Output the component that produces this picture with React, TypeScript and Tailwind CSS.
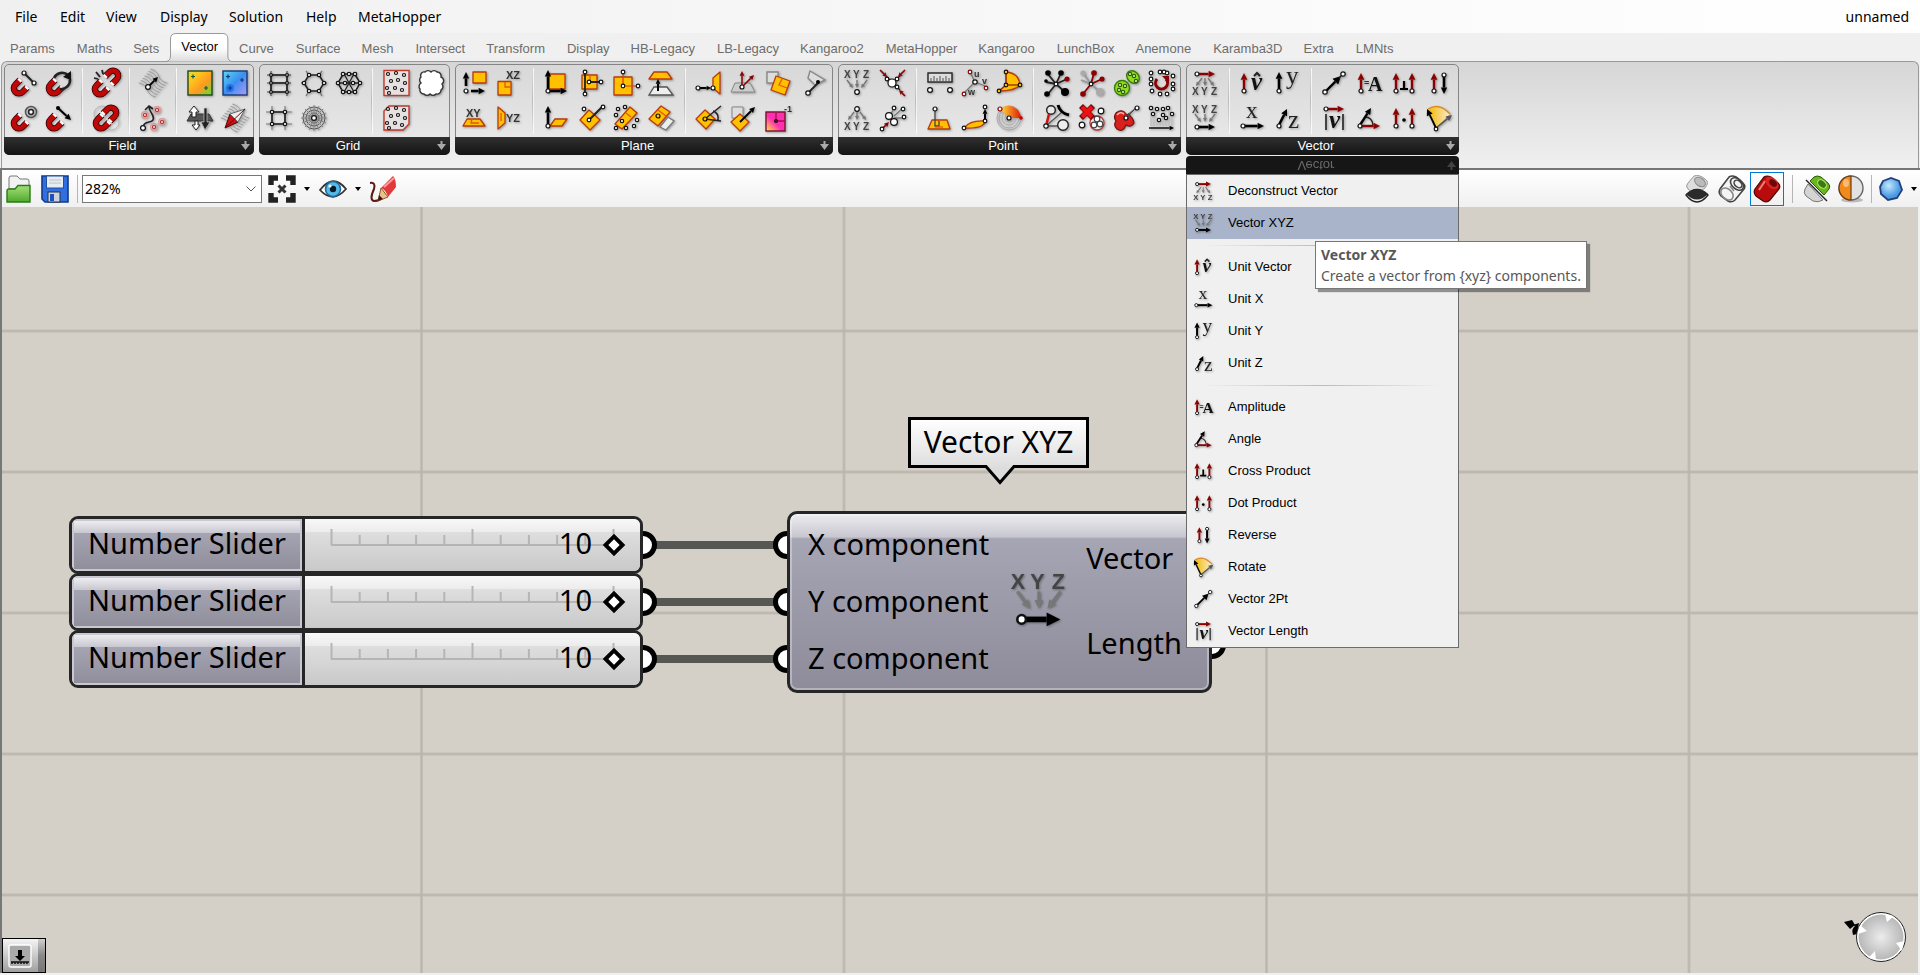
import React, { useState } from 'react';

const RED = '#8b0000';
const GOLD = '#ffc000';
const RUST = '#b83a0c';
const GREY = '#777';

type Pt = [number, number];

// ---------- icon primitives (26 x 26 box) ----------

const Dot = ({ x, y, r = 2, c = '#111', f = '#fff' }: { x: number; y: number; r?: number; c?: string; f?: string }) => (
  <circle cx={x} cy={y} r={r} fill={f} stroke={c} strokeWidth="1.2" />
);

const Arrow = ({ a, b, c = '#000', w = 2, s = 3 }: { a: Pt; b: Pt; c?: string; w?: number; s?: number }) => {
  const len = Math.hypot(b[0] - a[0], b[1] - a[1]);
  const ux = (b[0] - a[0]) / len;
  const uy = (b[1] - a[1]) / len;
  const mx = b[0] - ux * s * 2;
  const my = b[1] - uy * s * 2;
  return (
    <g>
      <path d={`M${a[0]} ${a[1]}L${mx} ${my}`} stroke={c} strokeWidth={w} />
      <path d={`M${b[0]} ${b[1]}L${mx - uy * s} ${my + ux * s}L${mx + uy * s} ${my - ux * s}Z`} fill={c} />
    </g>
  );
};

const Line = ({ d, c = '#222', w = 1.3, f = 'none' }: { d: string; c?: string; w?: number; f?: string }) => (
  <path d={d} stroke={c} strokeWidth={w} fill={f} />
);

const Plane = ({ d }: { d: string }) => <path d={d} fill={GOLD} stroke={RUST} strokeWidth="1.3" strokeLinejoin="round" />;

const Magnet = ({ t = '' }: { t?: string }) => (
  <g transform={t} fill="none">
    <path d="M9 10L4.500 14.500A5 5 0 0 0 11.500 22L16 17.500" stroke="#300" strokeWidth="6.400" />
    <path d="M9 10L4.500 14.500A5 5 0 0 0 11.500 22L16 17.500" stroke="#c00808" strokeWidth="4.800" />
    <path d="M9.500 9.500L8 11M16.500 17L15 18.500" stroke="#fff" strokeWidth="4.400" />
  </g>
);

const T = ({ x, y, s = 10, c = '#333', serif, italic, bold, children }: { x: number; y: number; s?: number; c?: string; serif?: boolean; italic?: boolean; bold?: boolean; children: string }) => (
  <text x={x} y={y} fontSize={s} fill={c} fontFamily={serif ? '"Liberation Serif", serif' : '"Liberation Sans", sans-serif'} fontStyle={italic ? 'italic' : 'normal'} fontWeight={bold ? 700 : 400}>
    {children}
  </text>
);

const Letters = ({ y }: { y: number }) => (
  <g>
    <T x={-1} y={y} c="#444" bold>X</T>
    <T x={8} y={y} c="#444" bold>Y</T>
    <T x={18} y={y} c="#444" bold>Z</T>
  </g>
);

const Rays = ({ y, up }: { y: number; up?: boolean }) =>
  up ? (
    <g>
      <Arrow a={[9, y]} b={[3, y + 8]} c={GREY} w={1.4} s={2} />
      <Arrow a={[12, y]} b={[12, y + 8]} c={GREY} w={1.4} s={2} />
      <Arrow a={[15, y]} b={[21, y + 8]} c={GREY} w={1.4} s={2} />
    </g>
  ) : (
    <g>
      <Arrow a={[2, y]} b={[8, y + 8]} c={GREY} w={1.4} s={2} />
      <Arrow a={[12, y]} b={[12, y + 8]} c={GREY} w={1.4} s={2} />
      <Arrow a={[22, y]} b={[16, y + 8]} c={GREY} w={1.4} s={2} />
    </g>
  );

const Dots = ({ p, r = 1.6, c, f }: { p: Pt[]; r?: number; c?: string; f?: string }) => (
  <g>{p.map(([x, y]) => <Dot key={`${x}-${y}`} x={x} y={y} r={r} c={c} f={f} />)}</g>
);

const Hatch = () => (
  <g stroke="#999" strokeWidth="0.9" fill="none">
    {[-9, -6, -3, 0, 3, 6, 9].map((k) => (
      <path key={k} d={`M2 ${13 + k}Q8 ${10 + k} 13 ${13 + k}T24 ${13 + k}`} transform="rotate(40 13 13)" />
    ))}
  </g>
);

const scatter: Pt[] = [[5, 4], [13, 3], [21, 5], [8, 11], [15, 10], [22, 13], [4, 18], [12, 18], [19, 20], [6, 23]];

// ---------- icons ----------

const icons: Record<string, React.ReactNode> = {
  lineCharge: <><Magnet /><Line d="M13 3L23 13" w={2} /><Dot x={13} y={3} /><Dot x={23} y={13} /></>,
  spinForce: <><Magnet /><path d="M8 8A9 9 0 0 1 22 5M24 9A9 9 0 0 1 14 19" fill="none" stroke="#222" strokeWidth="2.6" /><path d="M25 1V10L17 7Z" fill="#111" /></>,
  pointCharge: <><Magnet /><circle cx="20" cy="7" r="5.500" fill="none" stroke="#555" strokeWidth="1.500" /><circle cx="20" cy="7" r="2.400" fill="#fff" stroke="#222" strokeWidth="1.500" /></>,
  vectorForce: <><Magnet /><Arrow a={[12, 3]} b={[25, 15]} w={2} /><circle cx="12" cy="3" r="2" /></>,
  breakField: <><Magnet t="translate(-1 1)" /><Magnet t="rotate(180 13 13) translate(-2 2)" /><Line d="M1 8L5 9M3 2L7 7M9 0L10 4" w={1.8} /></>,
  mergeFields: <><circle cx="9" cy="9" r="8" fill="none" stroke="#bbb" /><circle cx="18" cy="17" r="8" fill="none" stroke="#bbb" /><Magnet /><Magnet t="rotate(180 13 13)" /></>,
  evaluateField: <><Hatch /><Arrow a={[8, 17]} b={[18, 7]} w={1.8} s={2.6} /><Dot x={8} y={17} r={2.4} /></>,
  fieldLine: <><Line d="M3 23Q3 18 9 17Q16 16 12 9Q9 5 9 1M5 5L9 1L13 4" w={1.6} /><Dot x={3} y={23} r={2.4} /><Dots p={[[5, 10], [17, 5], [14, 22], [22, 17]]} r={3.4} c="#d99" f="none" /><Dots p={[[5, 10], [17, 5], [14, 22], [22, 17]]} r={1.5} c="#b22" /></>,
  scalarDisplay: <><defs><linearGradient id="heat" x1="0" y1="0" x2="1" y2="1"><stop offset="0" stopColor="#dfe03a" /><stop offset="0.300" stopColor="#ffc21c" /><stop offset="0.600" stopColor="#ff9a1f" /><stop offset="1" stopColor="#5ae03a" /></linearGradient></defs><rect x="1" y="1" width="24" height="24" fill="url(#heat)" stroke="#1d4a1d" strokeWidth="1.400" /><Line d="M4 6.500H8M6 4.500V8.500M17 18H21M19 16V20" c="#154" w={1.2} /></>,
  perpDisplay: <><defs><linearGradient id="cool" x1="0" y1="0" x2="1" y2="1"><stop offset="0" stopColor="#5bd9f0" /><stop offset="0.500" stopColor="#3b8ef0" /><stop offset="1" stopColor="#b49af5" /></linearGradient></defs><rect x="1" y="1" width="24" height="24" fill="url(#cool)" stroke="#183a72" strokeWidth="1.400" /><circle cx="8" cy="18" r="4" fill="#1468e8" opacity="0.700" /><Line d="M4 6.500H8M6 4.500V8.500M18 10H22M20 8V12M6 18H10M8 16V20" c="#137" w={1.2} /></>,
  directionDisplay: <><path d="M0 16L4 9H22L26 16Z" fill="#555" stroke="#333" /><path d="M5 12V7H2L7 1L12 7H9V12Z" fill="#fff" stroke="#222" /><path d="M8 16V20H5L9 25L13 20H11V16Z" fill="#fff" stroke="#222" /><path d="M17 3V17H14L18 25L23 17H20V3Z" fill="#222" stroke="#ccc" strokeWidth="0.700" /></>,
  tensorDisplay: <><Hatch /><path d="M3 23L8 9L16 17Z" fill="#c11" stroke="#500" /><path d="M8 9L23 4L16 17Z" fill="#eee" stroke="#666" /><path d="M3 23L23 4" stroke="#800" /></>,

  rectGrid: <><Line d="M1 5H25M1 13H25M1 22H25M5 1V26M21 1V26" c="#444" w={1.1} /><Line d="M5 5H21M5 13H21M5 22H21M5 5V22M21 5V22" w={1.6} /><Dots p={[[5, 5], [21, 5], [5, 13], [21, 13], [5, 22], [21, 22]]} r={1.4} /></>,
  hexCell: <><Line d="M8 5H18L23 13L18 21H8L3 13Z" w={1.6} /><Line d="M8 5L5 1M18 5L21 1M23 13H26M18 21L21 26M8 21L5 26M3 13H0" c="#777" /><Dots p={[[8, 5], [18, 5], [23, 13], [18, 21], [8, 21], [3, 13]]} r={1.7} /></>,
  triGrid: <><Line d="M1 13H25M7 2L19 24M19 2L7 24M7 4H19L24 13L19 22H7L2 13Z" w={1.3} /><Line d="M7 5L2 13L7 22M19 5L24 13L19 22" w={1.2} /><Dots p={[[7, 4], [19, 4], [13, 4], [2, 13], [9, 13], [17, 13], [24, 13], [7, 22], [13, 22], [19, 22]]} r={1.7} /></>,
  squareGrid: <><Line d="M0 7H26M0 19H26M6 1V25M19 1V25" c="#777" w={1.1} /><Line d="M6 7H19V19H6Z" w={1.6} /><Dots p={[[6, 7], [19, 7], [6, 19], [19, 19]]} r={1.7} /></>,
  radialGrid: <><g fill="none" stroke="#555" strokeWidth="1"><circle cx="13" cy="13" r="11" /><circle cx="13" cy="13" r="8" /><circle cx="13" cy="13" r="5" /><path d="M13 0V26M0 13H26M4 4L22 22M22 4L4 22M1 8L25 18M25 8L1 18M8 1L18 25M18 1L8 25" stroke="#888" /></g><Dot x={13} y={13} r={2.4} /></>,
  pop2d: <><rect x="1" y="0.500" width="25" height="25" fill="#e6e2e2" stroke="#c0392b" strokeWidth="1.400" /><Dots p={scatter} r={1.5} /></>,
  pop3d: <><path d="M6 1H26V19L20 25H1V6Z" fill="#e6e2e2" stroke="#c0392b" strokeWidth="1.400" /><Dots p={scatter} r={1.5} /></>,
  popGeo: <path d="M3 7A3.500 3.500 0 0 1 7 2A4 4 0 0 1 13 2A4 4 0 0 1 19 2A4 4 0 0 1 23 7A4 4 0 0 1 24 14A4 4 0 0 1 23 20A4 4 0 0 1 18 24A4 4 0 0 1 12 24A4 4 0 0 1 6 24A4 4 0 0 1 2 19A4 4 0 0 1 3 13A4 4 0 0 1 3 7Z" fill="#fff" stroke="#333" strokeWidth="1.400" />,

  planeNew: <><Plane d="M11 2H24V13H11Z" /><Arrow a={[4, 16]} b={[4, 2]} w={2.6} s={3.2} /><Arrow a={[9, 21]} b={[23, 21]} w={2.6} s={3.2} /><Dot x={4} y={21} r={2} /></>,
  planeXZ: <><T x={9} y={9} s={11} bold>XZ</T><Plane d="M1 11.500H14V25H1Z" /><Line d="M8 12V17H13" c="#e05a10" /></>,
  planeXY: <><T x={4} y={12} s={11} bold>XY</T><Plane d="M5 14H18L23 21H1Z" /><Line d="M10 14L9 18H17" c="#e05a10" /></>,
  planeYZ: <><T x={9} y={17} s={11} bold>YZ</T><Plane d="M1 2L8 8V18L1 24Z" /><Line d="M4 8V16" c="#e05a10" /></>,
  planeOrigin: <><Plane d="M5 4H21V19H5Z" /><Arrow a={[4, 20]} b={[4, 0]} w={2.6} s={3.2} /><Arrow a={[4, 21]} b={[23, 21]} w={2.6} s={3.2} /><Dot x={4} y={21} r={2} /></>,
  planeNormal: <><Plane d="M6 21L11 14H23L18 21Z" /><Arrow a={[4, 20]} b={[4, 1]} w={2.6} s={3.2} /><Dot x={4} y={21} r={2} /></>,
  planeLine: <><Plane d="M3 5H18V19H3Z" /><Line d="M6 2V24M11 12H22" w={1.8} /><Line d="M11 5V12" c="#e05a10" /><Dots p={[[6, 2], [6, 24], [10, 12], [22, 12]]} r={1.8} /></>,
  planeLinePt: <><Plane d="M10 5L21 15L11 25L1 15Z" /><Line d="M10 15L23 2" w={2.2} /><Dots p={[[5, 4], [10, 15], [24, 2]]} r={1.8} /></>,
  plane3Pt: <><Plane d="M0 7H18V25H0Z" /><Line d="M9 3V16H24" c="#e03a10" w={1.2} /><Dots p={[[9, 2], [9, 16], [24, 16]]} r={1.8} /></>,
  planeFit: <><Plane d="M1 19L16 2L23 8L8 24Z" /><Line d="M12 8L17 12" c="#e05a10" /><Dots p={[[2, 10], [4, 4], [11, 2], [23, 15], [20, 21], [12, 23], [2, 23], [8, 16]]} r={1.7} /></>,
  planeOffset: <><Plane d="M5 2H18L23 9H0Z" /><path d="M5 17H18L24 25H0Z" fill="#eee" stroke="#555" strokeWidth="1.300" /><Arrow a={[9, 21]} b={[9, 9]} w={2} s={2.4} /></>,
  planeAdjust: <><path d="M11 22L19 12L25 16L17 25Z" fill="#eee" stroke="#777" strokeWidth="1.300" /><Plane d="M0 14L12 1L21 7L9 21Z" /><Line d="M9 5L17 11" c="#e05a10" /><Dot x={9} y={11} r={2} f={GOLD} /></>,
  planeCoord: <><Plane d="M24 2V24L17 18V8Z" /><Arrow a={[3, 18]} b={[15, 18]} w={2} s={2.2} /><Dots p={[[2, 18], [17, 18]]} r={2} /></>,
  alignPlane: <><Plane d="M9 5L19 14L10 24L0 14Z" /><Line d="M9 14L25 1M9 14L25 16M17 6Q23 8 22 15" w={1.4} /><Dot x={9} y={14} r={2} f={GOLD} /></>,
  planeAxes: <><path d="M4 13H19L24 22H0Z" fill="#ccc" stroke="#888" /><Arrow a={[11, 17]} b={[11, 1]} c={RED} w={1.5} s={2.4} /><Arrow a={[12, 16]} b={[23, 5]} c={RED} w={1.5} s={2.4} /><Dot x={11} y={17} r={2} /></>,
  planeRotate: <><path d="M1 2H12V13H1Z" fill="#ddd" stroke="#888" /><Plane d="M0 17L9 9L18 17L9 26Z" /><Arrow a={[9, 17]} b={[24, 2]} w={2} s={2.8} /></>,
  alignPlanes: <><path d="M1 2H12V13H1Z" fill="#ddd" stroke="#888" strokeWidth="1.400" /><Plane d="M10 6L24 11L19 25L5 20Z" /><Line d="M16 9L13 15L21 18" c="#e05a10" /></>,
  planeInverse: <><defs><linearGradient id="inv" x1="0" y1="1" x2="1" y2="0"><stop offset="0" stopColor="#ffef3a" /><stop offset="0.450" stopColor="#ff2fb0" /><stop offset="1" stopColor="#ff2fb0" /></linearGradient></defs><rect x="0" y="7" width="19" height="19" fill="url(#inv)" stroke="#7a1030" strokeWidth="1.400" /><Line d="M10 8V16H19" c="#a0104a" /><Dot x={10} y={16} r={1.4} f="#a01050" /><T x={18} y={7} s={9} bold>-1</T></>,
  planeClosest: <><path d="M9 1L24 10L14 15L7 8Z" fill="#ddd" stroke="#888" strokeWidth="1.400" /><Line d="M7 23L17 13" w={1.8} /><circle cx="17" cy="12" r="2" /><Dot x={7} y={23} r={2.2} /></>,

  ptXYZ: <><Letters y={8} /><Rays y={10} /><Dot x={12} y={22} r={2.3} /></>,
  ptDecon: <><Dot x={12} y={4} r={2.3} /><Rays y={7} up /><Letters y={25} /></>,
  ptCull: <><Line d="M6 6L20 20M20 6L12 13" w={1.4} /><Arrow a={[0, 0]} b={[7, 7]} c={RED} w={1.6} s={2.2} /><Arrow a={[25, 0]} b={[18, 7]} c={RED} w={1.6} s={2.2} /><Arrow a={[25, 26]} b={[19, 20]} c={RED} w={1.6} s={2.2} /><Dot x={12} y={13} r={4} /><Dots p={[[7, 9], [17, 9], [17, 17]]} r={1.8} /></>,
  ptGroups: <><Line d="M10 11L14 3M14 11L23 3M14 13L24 13" c="#777" /><Arrow a={[2, 24]} b={[9, 17]} c={RED} w={1.6} s={2.4} /><Dots p={[[2, 24], [14, 3], [23, 4], [24, 12]]} r={1.8} /><Dots p={[[9, 11], [14, 17]]} r={3.4} /></>,
  distance: <><rect x="1" y="3" width="24" height="9" fill="#ddd" stroke="#222" strokeWidth="1.400" /><Line d="M4 11V8M7 11V6M10 11V8M13 11V6M16 11V8M19 11V6M22 11V8" c="#555" w={1} /><Dots p={[[3, 20], [23, 20]]} r={2.4} /></>,
  ptOriented: <><Line d="M13 12L8 2M13 12L23 16M13 12L2 23" c="#777" /><Dot x={13} y={12} r={2.2} /><Dots p={[[8, 2], [24, 18], [2, 24]]} r={1.8} c={RED} /><T x={12} y={7} s={9} bold>u</T><T x={20} y={14} s={9} bold>v</T><T x={6} y={25} s={9} bold>w</T></>,
  ptPolar: <><path d="M9 2Q22 3 23 15Q18 21 2 21L9 15Z" fill={GOLD} stroke={RUST} strokeWidth="1.400" /><Line d="M9 2V15H23M9 15L2 21" c="#a33a00" /><Dots p={[[9, 2], [23, 15], [2, 21], [9, 15]]} r={1.8} f={GOLD} /></>,
  project: <><Plane d="M5 15H20L23 24H1Z" /><Line d="M8 4V21H12V16" c="#444" /><Line d="M8 22H16" c="#e05a10" /><Dot x={8} y={4} r={2} /></>,
  pull: <><path d="M2 23Q8 15 23 16Q22 24 2 23Z" fill={GOLD} stroke={RUST} strokeWidth="1.400" /><Arrow a={[23, 15]} b={[23, 4]} w={2} s={2.4} /><Dots p={[[23, 2], [23, 16], [2, 23]]} r={1.8} /></>,
  ptCylinder: <><defs><linearGradient id="fan"><stop offset="0" stopColor="#ffe23a" /><stop offset="1" stopColor="#e01000" /></linearGradient></defs><g fill="none" stroke="#aaa"><circle cx="12" cy="13" r="4" /><circle cx="12" cy="13" r="7" /><circle cx="12" cy="13" r="10" /><circle cx="12" cy="13" r="12" /></g><path d="M12 13L3 4Q12 -3 21 5L25 13Z" fill="url(#fan)" /><Dot x={12} y={13} r={2} /><Dot x={3} y={4} r={2} c={RED} /><circle cx="24" cy="13" r="1.800" fill="#c00" /></>,
  closestPt: <><Line d="M12 14L3 3M12 14L17 3M12 14L2 12M12 14L23 9M12 14L4 24M12 14L22 23" w={1.8} /><g><circle cx="4" cy="3" r="2.800" /><circle cx="17" cy="3" r="2.800" /><circle cx="2" cy="11" r="1.800" /><circle cx="23" cy="9" r="2.600" fill={RED} /><circle cx="3" cy="24" r="2.800" /><circle cx="21" cy="22" r="4" /></g><Dot x={12} y={14} r={1.8} /></>,
  closestPts: <><Line d="M12 14L4 3M12 14L2 10M12 14L21 22" c="#999" w={1.8} /><Line d="M12 14L15 3M12 14L23 9M12 14L4 24" c={RED} w={1.8} /><circle cx="4" cy="3" r="2.600" fill="#aaa" /><circle cx="21" cy="22" r="4" fill="#aaa" /><circle cx="15" cy="3" r="2.800" fill={RED} /><circle cx="23" cy="9" r="2.600" fill={RED} /><circle cx="4" cy="24" r="2.800" fill={RED} /><Dot x={12} y={14} r={1.8} /></>,
  proxLinks: <><circle cx="7" cy="5" r="4.300" fill="#e8e8e8" stroke="#222" strokeWidth="1.400" /><Line d="M2 21L5 9" c="#c11" w={2.4} /><Line d="M2 21L18 7M2 21H15" c="#555" /><path d="M14 0Q16 8 25 10" stroke="#000" strokeWidth="3" fill="none" /><circle cx="19" cy="20" r="5.300" fill="#eee" stroke="#222" strokeWidth="1.400" /><Dot x={2} y={21} r={2.2} /></>,
  cullPts: <><Dots p={[[22, 6], [3, 20]]} r={2.8} /><circle cx="18" cy="18" r="7" fill="#eee" stroke="#b33" strokeWidth="1.300" /><Dots p={[[18, 14], [15, 20], [21, 19]]} r={2.8} c="#444" /><path d="M2 1L14 13M14 1L2 13" stroke="#700" strokeWidth="5.600" /><path d="M3 2L13 12M13 2L3 12" stroke="#e11" strokeWidth="4.200" /></>,
  ptClusters: <><ellipse cx="19" cy="7" rx="7" ry="5.500" transform="rotate(45 19 7)" fill="#8ede1e" stroke="#3c7a10" strokeWidth="1.400" /><circle cx="8" cy="18" r="7.500" fill="#8ede1e" stroke="#3c7a10" strokeWidth="1.400" /><Dots p={[[16, 4], [20, 6], [22, 11], [6, 15], [11, 16], [5, 20], [9, 22]]} r={1.6} c="#2d5a08" f="#e8ffc0" /></>,
  metaball: <><Line d="M11 12L22 3" c="#666" w={1.4} /><path d="M2 8Q8 3 12 9Q19 11 20 18Q17 23 12 20Q9 28 3 24Q-1 20 2 16Q-1 12 2 8Z" fill="#d8201c" stroke="#701010" strokeWidth="1.200" /><path d="M3 10Q6 6 10 9" stroke="#ffb0a0" strokeWidth="1.600" fill="none" /><Arrow a={[20, 5]} b={[13, 12]} c="#444" w={1} s={2} /><Dot x={23} y={3} r={2} /><Dot x={12} y={13} r={2} /></>,
  sortAlong: <><Dots p={[[2, 3], [11, 2], [18, 3], [24, 6], [2, 9], [24, 14], [2, 14], [24, 19], [3, 21], [11, 24], [18, 24], [15, 2]]} r={1.8} /><path d="M8 9A6 6 0 1 0 17 9" fill="none" stroke={RED} strokeWidth="3" /><path d="M13 6H20V13Z" fill={RED} /></>,
  sortPts: <><Line d="M2 7V21M5 5V21M8 12V21M11 15V21M14 10V21M17 13V21M20 5V21M23 12V21" c="#bbb" w={1} /><Dots p={[[2, 3], [8, 4], [4, 9], [10, 15], [14, 10], [14, 4], [19, 3], [23, 9], [17, 13]]} r={1.7} /><Arrow a={[0, 23]} b={[25, 23]} w={1.4} s={2.2} /></>,

  deconVector: <><Arrow a={[4, 4]} b={[22, 4]} c={RED} w={2.4} s={3.2} /><Dot x={4} y={4} r={2} /><Rays y={8} up /><Letters y={25} /></>,
  vectorXYZ: <><Letters y={8} /><Rays y={9} /><Arrow a={[4, 22]} b={[22, 22]} w={2.6} s={3.2} /><Dot x={4} y={22} r={2} /></>,
  unitVector: <><Arrow a={[4, 20]} b={[4, 3]} c={RED} w={2.4} s={3.4} /><Dot x={4} y={21} r={2} /><T x={11} y={20} s={25} c="#111" serif italic bold>v</T><Line d="M14 6L17 3L20 6" w={2} /></>,
  unitX: <><T x={6} y={13} s={23} c="#222" serif>x</T><Arrow a={[4, 21]} b={[24, 21]} w={2.6} s={3.2} /><Dot x={3} y={21} r={2} /></>,
  unitY: <><Arrow a={[4, 20]} b={[4, 2]} w={2.6} s={3.4} /><Dot x={4} y={21} r={2} /><T x={11} y={14} s={25} c="#222" serif>y</T></>,
  unitZ: <><Arrow a={[4, 20]} b={[12, 4]} w={2.6} s={3.2} /><Dot x={4} y={21} r={2} /><T x={13} y={23} s={25} c="#222" serif>z</T></>,
  vector2pt: <><Arrow a={[3, 22]} b={[19, 6]} w={2.4} s={4} /><Line d="M17 8L21 4" /><Dot x={3} y={22} r={2.2} /><Dot x={21} y={4} r={2.2} /></>,
  amplitude: <><Arrow a={[4, 20]} b={[4, 3]} c={RED} w={2.4} s={3.4} /><Dot x={4} y={21} r={2} /><T x={7} y={16} s={9} bold>=</T><T x={11} y={21} s={20} c="#111" serif bold>A</T></>,
  cross: <><Arrow a={[4, 20]} b={[4, 3]} c={RED} w={2.4} s={3.4} /><Arrow a={[20, 20]} b={[20, 3]} c={RED} w={2.4} s={3.4} /><Line d="M12 11V19M8 19H16" c="#000" w={2.2} /><Dots p={[[4, 21], [20, 21]]} r={2} /></>,
  reverse: <><Arrow a={[7, 20]} b={[7, 3]} c={RED} w={2.4} s={3.4} /><Arrow a={[17, 6]} b={[17, 24]} w={2.6} s={3.2} /><Dots p={[[7, 21], [17, 5]]} r={2} /></>,
  vectorLength: <><Arrow a={[4, 4]} b={[22, 4]} c={RED} w={2.4} s={3.2} /><Dot x={4} y={4} r={2} /><Line d="M4 9V25M21 9V25" w={1.6} /><T x={7} y={23} s={25} c="#111" serif italic bold>v</T></>,
  angle: <><Line d="M8 12Q15 12 16 20" w={1.4} /><Arrow a={[3, 20]} b={[14, 3]} w={2.4} s={3.2} /><Arrow a={[3, 21]} b={[23, 21]} c={RED} w={2.4} s={3.2} /><Dot x={3} y={21} r={2} /></>,
  dotProduct: <><Arrow a={[4, 20]} b={[4, 3]} c={RED} w={2.4} s={3.4} /><Arrow a={[20, 20]} b={[20, 3]} c={RED} w={2.4} s={3.4} /><circle cx="12" cy="15" r="1.800" /><Dots p={[[4, 21], [20, 21]]} r={2} /></>,
  rotate: <><defs><linearGradient id="rot"><stop offset="0" stopColor="#f5b800" /><stop offset="1" stopColor="#f7ecd0" /></linearGradient></defs><path d="M9 23L1 5Q12 -3 23 9Z" fill="url(#rot)" /><path d="M1 4Q12 -3 23 9" fill="none" stroke="#e08a20" strokeWidth="1.400" /><Arrow a={[9, 23]} b={[0, 4]} w={1.8} s={3.2} /><Arrow a={[9, 23]} b={[25, 10]} c="#555" w={1.6} s={3} /><Dot x={9} y={24} r={1.8} /></>,
};

function Icon({ name, className = 'size-[26px]' }: { name: string; className?: string }) {
  return (
    <svg viewBox="0 0 26 26" aria-hidden="true" className={`${className} overflow-visible [filter:drop-shadow(1px_1px_1px_#00000055)]`}>
      {icons[name]}
    </svg>
  );
}

// ---------- data ----------

const menus = [
  { label: 'File', width: 'w-[45px]' },
  { label: 'Edit', width: 'w-[46px]' },
  { label: 'View', width: 'w-[54px]' },
  { label: 'Display', width: 'w-[69px]' },
  { label: 'Solution', width: 'w-[77px]' },
  { label: 'Help', width: 'w-[52px]' },
  { label: 'MetaHopper', width: 'w-[100px]' },
];

const tabs = ['Params', 'Maths', 'Sets', 'Vector', 'Curve', 'Surface', 'Mesh', 'Intersect', 'Transform', 'Display', 'HB-Legacy', 'LB-Legacy', 'Kangaroo2', 'MetaHopper', 'Kangaroo', 'LunchBox', 'Anemone', 'Karamba3D', 'Extra', 'LMNts'];

// each section lists its columns, top icon first
const groups: { title: string; sections: string[][][] }[] = [
  {
    title: 'Field',
    sections: [
      [['lineCharge', 'pointCharge'], ['spinForce', 'vectorForce']],
      [['breakField', 'mergeFields']],
      [['evaluateField', 'fieldLine']],
      [['scalarDisplay', 'directionDisplay'], ['perpDisplay', 'tensorDisplay']],
    ],
  },
  {
    title: 'Grid',
    sections: [
      [['rectGrid', 'squareGrid'], ['hexCell', 'radialGrid'], ['triGrid']],
      [['pop2d', 'pop3d'], ['popGeo']],
    ],
  },
  {
    title: 'Plane',
    sections: [
      [['planeNew', 'planeXY'], ['planeXZ', 'planeYZ']],
      [['planeOrigin', 'planeNormal'], ['planeLine', 'planeLinePt'], ['plane3Pt', 'planeFit'], ['planeOffset', 'planeAdjust']],
      [['planeCoord', 'alignPlane'], ['planeAxes', 'planeRotate'], ['alignPlanes', 'planeInverse'], ['planeClosest']],
    ],
  },
  {
    title: 'Point',
    sections: [
      [['ptXYZ', 'ptDecon'], ['ptCull', 'ptGroups']],
      [['distance', 'project'], ['ptOriented', 'pull'], ['ptPolar', 'ptCylinder']],
      [['closestPt', 'proxLinks'], ['closestPts', 'cullPts'], ['ptClusters', 'metaball'], ['sortAlong', 'sortPts']],
    ],
  },
  {
    title: 'Vector',
    sections: [
      [['deconVector', 'vectorXYZ']],
      [['unitVector', 'unitX'], ['unitY', 'unitZ']],
      [['vector2pt', 'vectorLength'], ['amplitude', 'angle'], ['cross', 'dotProduct'], ['reverse', 'rotate']],
    ],
  },
];

const vectorMenu = [
  [
    { label: 'Deconstruct Vector', icon: 'deconVector' },
    { label: 'Vector XYZ', icon: 'vectorXYZ' },
  ],
  [
    { label: 'Unit Vector', icon: 'unitVector' },
    { label: 'Unit X', icon: 'unitX' },
    { label: 'Unit Y', icon: 'unitY' },
    { label: 'Unit Z', icon: 'unitZ' },
  ],
  [
    { label: 'Amplitude', icon: 'amplitude' },
    { label: 'Angle', icon: 'angle' },
    { label: 'Cross Product', icon: 'cross' },
    { label: 'Dot Product', icon: 'dotProduct' },
    { label: 'Reverse', icon: 'reverse' },
    { label: 'Rotate', icon: 'rotate' },
    { label: 'Vector 2Pt', icon: 'vector2pt' },
    { label: 'Vector Length', icon: 'vectorLength' },
  ],
];

// ---------- ribbon ----------

const Expand = ({ className = '' }: { className?: string }) => (
  <svg viewBox="0 0 9 9" aria-hidden="true" className={`size-[9px] ${className}`}>
    <path d="M3.500 0H5.500V3H9L4.500 9L0 3H3.500Z" fill="#aaa" />
  </svg>
);

function VectorMenu() {
  return (
    <div className="absolute -inset-x-px top-full z-20 mt-[2px]">
      <div className="relative flex h-[18px] items-center justify-center rounded-t-[4px] bg-[#161616] pr-[13px] text-[13px] text-[#6a6a6a]">
        <span className="-scale-y-100" aria-hidden="true">Vector</span>
        <Expand className="absolute right-[3px] -scale-y-100 opacity-30" />
      </div>
      <ul role="menu" className="border border-[#6b6b6b] bg-[#f0f0f0]">
        {vectorMenu.map((section, i) => (
          <React.Fragment key={i}>
            {i > 0 && (
              <li role="separator" className="flex h-3 items-center">
                <span className="mx-4 h-px flex-1 bg-linear-to-r from-transparent via-[#bbb] to-transparent" />
              </li>
            )}
            {section.map((item) => (
              <li key={item.label} role="none" className="relative">
                <button
                  role="menuitem"
                  className={`flex h-8 w-full items-center gap-[14px] px-[7px] text-left text-[13px] text-black ${item.label === 'Vector XYZ' ? 'bg-[#a9b4ca]' : ''}`}
                >
                  <Icon name={item.icon} className="size-5" />
                  {item.label}
                </button>
                {item.label === 'Vector XYZ' && <Tooltip />}
              </li>
            ))}
          </React.Fragment>
        ))}
      </ul>
    </div>
  );
}

function Tooltip() {
  return (
    <div
      role="tooltip"
      className="absolute top-[34px] left-[128px] z-30 border border-[#767676] bg-white px-[5px] py-[2px] font-['Noto_Sans',sans-serif] text-[14px] leading-[21px] whitespace-nowrap text-[#575757] shadow-[3px_3px_1px_#00000066]"
    >
      <strong className="block">Vector XYZ</strong>
      Create a vector from {'{xyz}'} components.
    </div>
  );
}

function RibbonGroup({ title, sections }: { title: string; sections: string[][][] }) {
  return (
    <section className="relative flex flex-col rounded-[5px] border border-[#858585] bg-linear-to-b from-[#d8d8d8] to-[#ebebeb]">
      <div className="flex h-[72px] px-px">
        {sections.map((columns, i) => (
          <React.Fragment key={i}>
            {i > 0 && <div className="mx-[5px] my-[3px] w-[2px] border-r border-white/80 bg-linear-to-b from-transparent via-[#bbb] to-transparent" />}
            {columns.map((column) => (
              <div key={column[0]} className="flex flex-col">
                {column.map((name) => (
                  <button key={name} aria-label={name} className="flex size-[35px] items-center justify-center">
                    <Icon name={name} />
                  </button>
                ))}
              </div>
            ))}
          </React.Fragment>
        ))}
      </div>
      <div className="relative -mx-px -mb-px flex h-[18px] items-center justify-center rounded-b-[5px] bg-linear-to-b from-[#303030] to-[#141414] pr-[13px] pb-[2px] text-[13px] leading-none text-white">
        {title}
        <Expand className="absolute right-[4px]" />
      </div>
      {title === 'Vector' && <VectorMenu />}
    </section>
  );
}

function Tabs() {
  const [active, setActive] = useState('Vector');
  return (
    <nav className="relative z-10 flex h-7 items-stretch bg-[#f0f0f0]">
      {tabs.map((tab) =>
        tab === active ? (
          <button key={tab} className="relative flex h-[29px] items-center px-[11px] pb-[2px] text-[13px] text-black even:pr-[10px]">
            <svg viewBox="0 0 66 29" preserveAspectRatio="none" className="absolute -inset-x-[4px] inset-y-0 h-full w-[calc(100%+8px)]" aria-hidden="true">
              <defs>
                <linearGradient id="tab" x1="0" y1="0" x2="0" y2="1"><stop offset="0.500" stopColor="#fff" /><stop offset="1" stopColor="#dcdcdc" /></linearGradient>
              </defs>
              <path d="M0 28.500Q4.500 28 4.500 23V6Q4.500 0.500 10 0.500H57Q62 0.500 62 6V23Q62 28 66 28.500" fill="url(#tab)" stroke="#999" />
            </svg>
            <span className="relative">{tab}</span>
          </button>
        ) : (
          <button key={tab} onClick={() => setActive(tab)} className="px-[11px] pt-[3px] text-[13px] text-[#6d6d6d] first:pl-[10px] even:pr-[10px]">
            {tab}
          </button>
        )
      )}
    </nav>
  );
}

// ---------- canvas toolbar ----------

const Caret = () => (
  <svg viewBox="0 0 6 4" className="w-[6px]" aria-hidden="true"><path d="M0 0H6L3 4Z" /></svg>
);

const ToolSeparator = ({ className = '' }: { className?: string }) => <div className={`h-7 w-px bg-[#b5b5b5] ${className}`} />;

// rounded cylinder lying on its side, seen from the open end
function Toolbar() {
  return (
    <div className="flex h-[39px] shrink-0 items-center border-t-2 border-l-2 border-t-[#777] border-l-[#777] bg-linear-to-b from-white to-[#f0f0f0] pl-[4px]">
      <button aria-label="Open file">
        <svg viewBox="0 0 26 28" className="h-7 w-[26px]">
          <defs><linearGradient id="folder" x1="0" y1="0" x2="0" y2="1"><stop offset="0" stopColor="#a4e07a" /><stop offset="1" stopColor="#4fa82c" /></linearGradient></defs>
          <path d="M3 14V3Q3 1 5 1H11L14 4H21Q23 4 23 6V14Z" fill="#f2f2f2" stroke="#777" />
          <path d="M1 27V16Q1 14 3 14H9L12 10.500H24V27Z" fill="url(#folder)" stroke="#2d7a16" strokeWidth="1.400" />
        </svg>
      </button>
      <button aria-label="Save file" className="ml-[9px]">
        <svg viewBox="0 0 28 28" className="size-7">
          <path d="M1 1H27V27H4L1 24Z" fill="#2f6fe0" stroke="#123a8a" strokeWidth="1.600" />
          <rect x="5.500" y="1" width="17" height="12" fill="#e8edf2" stroke="#2050a0" />
          <path d="M8 5H20M8 8H20" stroke="#b9c0c8" />
          <rect x="7" y="17" width="12" height="10" fill="#d0d4da" stroke="#234" />
          <rect x="9" y="19" width="4" height="7" fill="#1a50c0" />
        </svg>
      </button>
      <ToolSeparator className="ml-[8px]" />
      <select aria-label="Zoom" defaultValue="282%" className="ml-[4px] h-7 w-[180px] appearance-none border border-[#767676] bg-white pl-[2px] font-['Noto_Sans',sans-serif] text-[14px] text-black">
        <option>282%</option>
        <option>100%</option>
      </select>
      <svg viewBox="0 0 10 6" className="-ml-4 w-[10px]" aria-hidden="true"><path d="M0.500 0.500L5 5L9.500 0.500" fill="none" stroke="#555" /></svg>
      <button aria-label="Zoom extents" className="ml-[12px] flex items-center gap-[8px]">
        <svg viewBox="0 0 28 28" className="size-7">
          <path d="M3 10V3H10M18 3H25V10M25 18V25H18M10 25H3V18" fill="none" stroke="#222" strokeWidth="5.400" />
          <path d="M10.500 10.500L17.500 17.500M17.500 10.500L10.500 17.500" stroke="#333" strokeWidth="3" />
        </svg>
        <Caret />
      </button>
      <button aria-label="Named views" className="ml-[9px] flex items-center gap-[8px]">
        <svg viewBox="0 0 28 20" className="h-5 w-7">
          <path d="M1 11Q14 -6 27 10Q14 25 1 11Z" fill="#fff" stroke="#333" strokeWidth="1.800" />
          <circle cx="14" cy="10" r="7.500" fill="#58b8e4" stroke="#1b6b9c" strokeWidth="1.600" />
          <circle cx="14" cy="10" r="3.200" fill="#051c30" />
          <circle cx="11" cy="7" r="1.600" fill="#fff" />
        </svg>
        <Caret />
      </button>
      <button aria-label="Sketch" className="ml-[8px]">
        <svg viewBox="0 0 28 28" className="size-7">
          <path d="M1 8Q7 7 5 14Q0 25 5 26Q12 26 15 20" fill="none" stroke="#5a1a10" strokeWidth="2" />
          <path d="M9 26L12 13L19 22Z" fill="#e8c28a" stroke="#8a5a30" />
          <path d="M12 13L24 1Q27 4 27 12L19 22Q17 15 12 13Z" fill="#e23a3a" />
          <path d="M15 12L25 3" stroke="#ff9a9a" strokeWidth="2" />
          <path d="M9 26L10 20L14 24Z" fill="#4a1010" />
        </svg>
      </button>

      <div className="ml-auto flex items-center pr-[3px]">
        <button aria-label="No preview">
          <svg viewBox="0 0 24 28" className="h-7 w-6">
            <path d="M9 1Q14 -1 20 4Q25 7 20 13L14 17Q8 19 3 14Q0 11 3 8Z" fill="#ddd" stroke="#999" />
            <ellipse cx="15" cy="7" rx="6" ry="4" transform="rotate(35 15 7)" fill="#bbb" stroke="#888" />
            <path d="M1 20Q12 9 23 20Q12 34 1 20Z" fill="#eee" stroke="#222" strokeWidth="1.400" />
            <path d="M1 19Q12 9 23 19Q12 30 1 19Z" fill="#2a2a2a" />
          </svg>
        </button>
        <button aria-label="Wireframe preview" className="ml-[9px]">
          <svg viewBox="0 0 28 28" className="size-7" fill="none" stroke="#444" strokeWidth="1.600">
            <path d="M11 2Q14 0 18 2L25 8Q28 11 26 14L17 25Q14 28 10 26L3 21Q0 18 2 14Z" fill="#f4f4f4" />
            <ellipse cx="19" cy="9" rx="7.500" ry="5" transform="rotate(42 19 9)" />
            <ellipse cx="20" cy="9" rx="4.500" ry="3" transform="rotate(42 20 9)" />
            <ellipse cx="9" cy="19" rx="7" ry="5" transform="rotate(42 9 19)" stroke="#888" />
            <path d="M12 11L16 16" stroke="#888" />
          </svg>
        </button>
        <button aria-label="Shaded preview" aria-pressed="true" className="ml-[4px] flex size-[34px] items-center justify-center border border-[#0078d7]">
          <svg viewBox="0 0 28 28" className="size-7">
            <path d="M11 2Q14 0 18 2L25 8Q28 11 26 14L17 25Q14 28 10 26L3 21Q0 18 2 14Z" fill="#b80c0c" stroke="#4a0505" strokeWidth="1.200" />
            <ellipse cx="19" cy="8" rx="7.500" ry="5" transform="rotate(42 19 8)" fill="#d8241e" />
            <ellipse cx="20" cy="8" rx="4.500" ry="3" transform="rotate(42 20 8)" fill="#6a0808" />
            <path d="M6 15L12 6" stroke="#f08078" strokeWidth="2" />
          </svg>
        </button>
        <ToolSeparator className="ml-[8px]" />
        <button aria-label="Preview selected" className="ml-[10px]">
          <svg viewBox="0 0 28 28" className="size-7">
            <path d="M5 9L20 25Q15 28 10 26L3 21Q0 18 2 14Z" fill="#d4d4d4" stroke="#777" />
            <path d="M7 6L11 2Q14 0 18 2L25 8Q28 11 26 14L21 20Z" fill="#6ab81e" stroke="#2d5a08" />
            <ellipse cx="19" cy="9" rx="5" ry="3.400" transform="rotate(42 19 9)" fill="#3c7a10" stroke="#b5ec7a" />
            <path d="M3 5L24 26" stroke="#222" strokeWidth="1.400" />
          </svg>
        </button>
        <button aria-label="Document preview" className="ml-[7px]">
          <svg viewBox="0 0 27 28" className="h-7 w-[27px]">
            <ellipse cx="14" cy="25" rx="11" ry="2.500" fill="#bbb" />
            <circle cx="13" cy="13" r="12" fill="#e2e2e2" stroke="#666" strokeWidth="1.400" />
            <path d="M13 1A12 12 0 0 0 13 25Z" fill="#f08a1c" stroke="#703a10" strokeWidth="1.200" />
            <ellipse cx="8" cy="8" rx="3" ry="4" fill="#ffd09a" opacity="0.700" />
          </svg>
        </button>
        <ToolSeparator className="ml-[6px]" />
        <button aria-label="Preview quality" className="ml-[7px] flex items-center gap-[8px]">
          <svg viewBox="0 0 24 24" className="size-6">
            <defs><radialGradient id="gem" cx="0.400" cy="0.350"><stop offset="0" stopColor="#c4e8fc" /><stop offset="1" stopColor="#4a9ae4" /></radialGradient></defs>
            <path d="M4 4L12 1L20 4L23 13L18 21L9 23L2 17L1 10Z" fill="url(#gem)" stroke="#20407c" strokeWidth="1.800" />
          </svg>
          <Caret />
        </button>
      </div>
    </div>
  );
}

// ---------- canvas ----------

const ROWS = [338, 395, 452];

function NumberSlider({ id }: { id: string }) {
  const [value, setValue] = useState(10);
  return (
    <div className="-mt-px flex h-[58px] overflow-hidden rounded-[9px] border-[3px] border-[#262626] text-[29px] first:mt-0">
      <label
        htmlFor={id}
        className="flex w-[230px] items-center justify-center border-2 border-[#c9c8d2] bg-[linear-gradient(#ececf0,#c8c7d0_25%,#a5a4b2_26%,#908e9b)] pb-[4px]"
      >
        Number Slider
      </label>
      <div className="relative flex-1 border-l-[3px] border-[#262626] bg-[linear-gradient(#f8f8f8,#ececec_25%,#dedede_26%,#c9c9c9)]">
        <svg viewBox="0 0 285 18" className="absolute top-[10px] left-[25px] h-[18px] w-[285px]" aria-hidden="true">
          <path d="M1 16H284" stroke="#b5b5b5" strokeWidth="2" />
          {Array.from({ length: 11 }, (_, i) => (
            <path key={i} d={`M${1.5 + i * 28.2} ${i % 5 ? 6 : 0}V16`} stroke="#b5b5b5" strokeWidth="2" />
          ))}
        </svg>
        <output htmlFor={id} className="absolute inset-y-0 right-[48px] flex items-center pb-[4px]">{value}</output>
        <input
          id={id}
          type="range"
          min={0}
          max={10}
          value={value}
          onChange={(e) => setValue(Number(e.target.value))}
          className="absolute inset-y-0 right-[18px] w-[299px] appearance-none bg-transparent [&::-webkit-slider-thumb]:size-4 [&::-webkit-slider-thumb]:rotate-45 [&::-webkit-slider-thumb]:appearance-none [&::-webkit-slider-thumb]:border-4 [&::-webkit-slider-thumb]:border-black [&::-webkit-slider-thumb]:bg-white"
        />
      </div>
    </div>
  );
}

function Canvas() {
  return (
    <main className="relative mr-[2px] mb-[2px] flex-1 overflow-hidden border-l-2 border-[#777] bg-[#d4d0c8] font-['Noto_Sans',sans-serif] text-black">
      <svg className="absolute inset-0 size-full" aria-hidden="true">
        <defs>
          <pattern id="grid" x="-1.500" y="-15.500" width="422.500" height="141" patternUnits="userSpaceOnUse">
            <path d="M0 139.500H422.500M421 0V141" stroke="#bab6ae" strokeWidth="2.400" />
          </pattern>
        </defs>
        <rect width="100%" height="100%" fill="url(#grid)" />
        {ROWS.map((y) => (
          <g key={y} stroke="#000" strokeWidth="5" fill="#fff">
            <path d={`M650 ${y}H775`} stroke="#565652" strokeWidth="8" />
            <circle cx="641" cy={y} r="11.500" />
            <circle cx="785" cy={y} r="11.500" />
          </g>
        ))}
        <circle cx="1210" cy="438" r="11.500" fill="#fff" stroke="#000" strokeWidth="5" />
      </svg>

      <div className="absolute top-[309px] left-[67px] w-[574px]">
        <NumberSlider id="slider-x" />
        <NumberSlider id="slider-y" />
        <NumberSlider id="slider-z" />
      </div>

      <div className="absolute top-[210px] left-[906px] h-[68px] w-[181px]">
        <svg viewBox="0 0 181 68" className="absolute inset-0 size-full" aria-hidden="true">
          <defs><linearGradient id="callout" x1="0" y1="0" x2="0" y2="1"><stop offset="0" stopColor="#fff" /><stop offset="0.800" stopColor="#dcdcdc" /></linearGradient></defs>
          <path d="M1.500 1.500H179.500V49.500H106L92 65.500L78 49.500H1.500Z" fill="url(#callout)" stroke="#000" strokeWidth="3" />
        </svg>
        <p className="relative text-center text-[30px] leading-[50px]">Vector XYZ</p>
      </div>

      <div className="absolute top-[304px] left-[785px] flex h-[182px] w-[425px] rounded-[10px] border-[3px] border-[#262626] bg-[linear-gradient(#ececf0,#c8c7d0_13%,#a6a5b3_14%,#8e8c9a)] pt-px pl-[18px] text-[29px] shadow-[inset_0_0_0_2px_#ffffff55]">
        <ul>
          <li className="flex h-[57px] items-center">X component</li>
          <li className="flex h-[57px] items-center">Y component</li>
          <li className="flex h-[57px] items-center">Z component</li>
        </ul>
        <Icon name="vectorXYZ" className="mt-[57px] ml-[24px] size-[56px]" />
        <ul className="ml-[17px]">
          <li className="flex h-[85px] items-center">Vector</li>
          <li className="flex h-[85px] items-center">Length</li>
        </ul>
      </div>

      <button aria-label="Show panel" className="absolute bottom-0 left-0 flex h-[35px] w-11 items-center border border-black bg-linear-to-b from-[#f5f5f5] to-[#a0a0a0] pl-[5px]">
        <svg viewBox="0 0 24 24" className="size-6">
          <rect x="1" y="1" width="22" height="22" rx="2" fill="#aaa" stroke="#fff" strokeWidth="1.400" />
          <path d="M10 6H14V12H17L12 17L7 12H10Z" />
          <path d="M3 18H21M4 20V18M7 20V18M10 20V18M13 20V18M16 20V18M19 20V18" stroke="#111" strokeWidth="1.500" />
        </svg>
        <span className="absolute inset-y-0 right-0 w-[7px] bg-linear-to-b from-[#d0d0d0] via-[#888] to-[#777]" />
      </button>

      <svg viewBox="0 0 66 56" className="absolute right-[10px] bottom-[8px] h-14 w-[66px]" aria-label="Compass">
        <defs><radialGradient id="compass"><stop offset="0" stopColor="#ececec" /><stop offset="1" stopColor="#b8b8b8" /></radialGradient></defs>
        <path d="M2 13L10 11L13 16L8 20Z" />
        <path d="M11 16L17 14L15 25L11 26Q9 20 13 17Z" />
        <circle cx="39" cy="28" r="24.500" fill="#fff" stroke="#222" />
        <circle cx="39" cy="28" r="22.500" fill="url(#compass)" />
        <path d="M43 5L52 7L45 13ZM62 32L60 42L54 34ZM34 51L26 49L33 42ZM16 25L18 16L25 22Z" fill="#fff" />
      </svg>
    </main>
  );
}

export default function App() {
  return (
    <div className="flex h-screen flex-col overflow-hidden bg-[#f0f0f0] font-['Liberation_Sans',sans-serif]">
      <header className="flex h-[33px] shrink-0 items-center bg-linear-to-r from-[#f0f0f0] to-white pr-[11px] pl-[15px] font-['Noto_Sans',sans-serif] text-[14px] text-black">
        {menus.map((menu) => (
          <button key={menu.label} className={`text-left ${menu.width}`}>{menu.label}</button>
        ))}
        <span className="ml-auto">unnamed</span>
      </header>
      <Tabs />
      <div className="mx-px flex h-[107px] shrink-0 items-start gap-[5px] rounded-t-[6px] border-t border-r border-l border-[#999] bg-linear-to-b from-[#d6d6d6] to-[#f0f0f0] pt-[2px] pl-[2px]">
        {groups.map((group) => (
          <RibbonGroup key={group.title} {...group} />
        ))}
      </div>
      <Toolbar />
      <Canvas />
    </div>
  );
}
